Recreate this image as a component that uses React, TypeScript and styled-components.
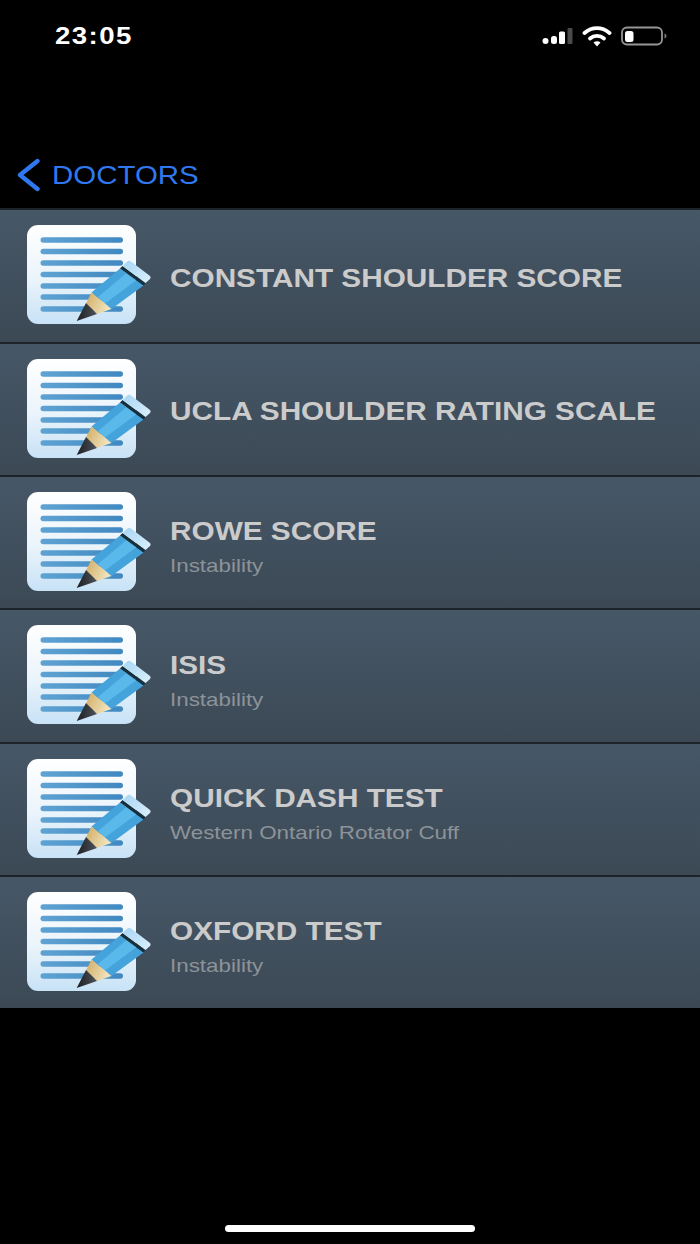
import React from "react";
import styled, { createGlobalStyle, css } from "styled-components";

const Global = createGlobalStyle`
  html, body { margin: 0; padding: 0; background: #000; }
  body { font-family: "Liberation Sans", Arial, sans-serif; }
`;

const stretched = (x: number) => css`
  display: block;
  transform: scaleX(${x});
  transform-origin: left center;
  white-space: nowrap;
`;

const Page = styled.div`
  width: 700px;
  height: 1244px;
  background: #000;
  display: flex;
  flex-direction: column;
  overflow: hidden;
  position: relative;
`;

const StatusBar = styled.div`
  height: 72px;
  display: flex;
  align-items: flex-start;
  justify-content: space-between;
  padding: 21px 33px 0 55px;
  box-sizing: border-box;
`;

const Clock = styled.span`
  color: #fff;
  font-size: 23px;
  line-height: 30px;
  font-weight: 700;
  letter-spacing: 1.2px;
  ${stretched(1.2)}
`;

const StatusIcons = styled.div`
  display: flex;
  align-items: center;
  gap: 9px;
  height: 30px;
`;

const NavBar = styled.div`
  height: 136px;
  box-sizing: border-box;
  padding: 86px 0 0 16px;
  display: flex;
  align-items: flex-start;
  gap: 11px;
`;

const BackLabel = styled.span`
  color: #2f78f0;
  font-size: 25px;
  line-height: 34px;
  ${stretched(1.178)}
`;

const List = styled.div`
  display: flex;
  flex-direction: column;
`;

const Row = styled.div<{ $h: number }>`
  height: ${(p) => p.$h}px;
  box-sizing: border-box;
  background: linear-gradient(#465767, #3c4955);
  border-top: 2px solid #1c2329;
  display: flex;
  align-items: center;
  padding-left: 26px;
  gap: 19px;
`;

const TextBlock = styled.div<{ $sub: boolean }>`
  display: flex;
  flex-direction: column;
  gap: 7px;
  padding-top: ${(p) => (p.$sub ? 8 : 3)}px;
`;

const Title = styled.div`
  color: #cbcbcb;
  font-size: 25px;
  line-height: 32px;
  font-weight: 700;
  ${stretched(1.19)}
`;

const Subtitle = styled.div`
  color: #8c9399;
  font-size: 18.5px;
  line-height: 24px;
  ${stretched(1.21)}
`;

const IconSvg = styled.svg`
  flex-shrink: 0;
  margin-top: -3px;
`;

const HomeBar = styled.div`
  position: absolute;
  left: 225px;
  bottom: 12px;
  width: 250px;
  height: 7px;
  border-radius: 4px;
  background: #fff;
`;

const Signal = () => (
  <svg width="32" height="20" viewBox="0 0 32 20">
    <circle cx="4.5" cy="15" r="3" fill="#fff" />
    <rect x="10" y="10" width="6" height="8" rx="2.5" fill="#fff" />
    <rect x="18" y="5.5" width="6" height="12.5" rx="1.5" fill="#fff" />
    <rect x="26.5" y="2" width="5" height="16" rx="1" fill="#4a4a4a" />
  </svg>
);

const Wifi = () => (
  <svg width="30" height="22" viewBox="0 0 30 22">
    <path d="M2.5 8C10 1.5 20 1.5 27.5 8" fill="none" stroke="#fff" strokeWidth="3.8" strokeLinecap="round" />
    <path d="M8 13.5C12 10 18 10 22 13.5" fill="none" stroke="#fff" strokeWidth="3.8" strokeLinecap="round" />
    <path d="M11.5 17.5L15 21.5L18.5 17.5C16.5 15.8 13.5 15.8 11.5 17.5Z" fill="#fff" />
  </svg>
);

const Battery = () => (
  <svg width="46" height="20" viewBox="0 0 46 20">
    <rect x="1" y="1.5" width="40" height="17" rx="5" fill="none" stroke="#969696" strokeWidth="1.8" />
    <rect x="4" y="5" width="8.5" height="11" rx="2.5" fill="#fff" />
    <path d="M43.5 7.5C45 8.2 45.5 9 45.5 10C45.5 11 45 11.8 43.5 12.5Z" fill="#7a7a7a" />
  </svg>
);

const Chevron = () => (
  <svg width="25" height="34" viewBox="0 0 25 34">
    <path d="M21.5 3L4 17L21.5 31" fill="none" stroke="#2f78f0" strokeWidth="4.4" strokeLinecap="round" strokeLinejoin="round" />
  </svg>
);

const NoteIcon = ({ id }: { id: number }) => (
  <IconSvg width="125" height="99" viewBox="0 0 125 99">
    <defs>
      <linearGradient id={`paper${id}`} x1="0" y1="0" x2="0" y2="1">
        <stop offset="0" stopColor="#ffffff" />
        <stop offset="0.55" stopColor="#eaf4fb" />
        <stop offset="1" stopColor="#c8e2f6" />
      </linearGradient>
      <linearGradient id={`line${id}`} x1="0" y1="0" x2="1" y2="0">
        <stop offset="0" stopColor="#5fa3d3" />
        <stop offset="1" stopColor="#4088c0" />
      </linearGradient>
      <linearGradient id={`wood${id}`} x1="0" y1="0" x2="1" y2="0.4">
        <stop offset="0" stopColor="#d0ab62" />
        <stop offset="1" stopColor="#f0e3bc" />
      </linearGradient>
      <linearGradient id={`tip${id}`} x1="0" y1="0" x2="1" y2="0">
        <stop offset="0" stopColor="#1d2024" />
        <stop offset="1" stopColor="#4e5258" />
      </linearGradient>
      <linearGradient id={`eraser${id}`} x1="0" y1="0" x2="1" y2="1">
        <stop offset="0" stopColor="#a6d5f4" />
        <stop offset="1" stopColor="#dcf0fc" />
      </linearGradient>
    </defs>
    <rect x="1" y="0" width="109" height="99" rx="11" fill={`url(#paper${id})`} />
    {[15, 26.5, 38, 49.5, 61, 72, 84].map((y) => (
      <rect key={y} x="14.5" y={y - 2.75} width="82.5" height="5.5" rx="2.75" fill={`url(#line${id})`} />
    ))}
    <path d="M65.5 67.5L94 43.5L117.5 60.5L85.5 84Z" fill="#45a3dc" />
    <path d="M72 72L100.5 48L110 55.5L79 78.5Z" fill="#5ab9ea" />
    <path d="M94 43.5L96.5 41L119.5 58L117.5 60.5Z" fill="#14303e" />
    <path d="M96.7 41L101 36.8C102.2 35.6 103.6 35.5 105 36.5L123.4 50.5C124.8 51.6 125 52.8 124 54L119.5 58Z" fill={`url(#eraser${id})`} />
    <path d="M65.5 67.5L85.5 84L71 89L60 78.5Z" fill={`url(#wood${id})`} />
    <path d="M60 78L71 89L50.7 96Z" fill={`url(#tip${id})`} />
  </IconSvg>
);

const rows = [
  { title: "CONSTANT SHOULDER SCORE", h: 134 },
  { title: "UCLA SHOULDER RATING SCALE", h: 133 },
  { title: "ROWE SCORE", sub: "Instability", h: 133 },
  { title: "ISIS", sub: "Instability", h: 134 },
  { title: "QUICK DASH TEST", sub: "Western Ontario Rotator Cuff", h: 133 },
  { title: "OXFORD TEST", sub: "Instability", h: 133 },
];

export default function App() {
  return (
    <Page>
      <Global />
      <StatusBar>
        <Clock>23:05</Clock>
        <StatusIcons>
          <Signal />
          <Wifi />
          <Battery />
        </StatusIcons>
      </StatusBar>
      <NavBar>
        <Chevron />
        <BackLabel>DOCTORS</BackLabel>
      </NavBar>
      <List>
        {rows.map((r, i) => (
          <Row key={r.title} $h={r.h}>
            <NoteIcon id={i} />
            <TextBlock $sub={!!r.sub}>
              <Title>{r.title}</Title>
              {r.sub && <Subtitle>{r.sub}</Subtitle>}
            </TextBlock>
          </Row>
        ))}
      </List>
      <HomeBar />
    </Page>
  );
}
